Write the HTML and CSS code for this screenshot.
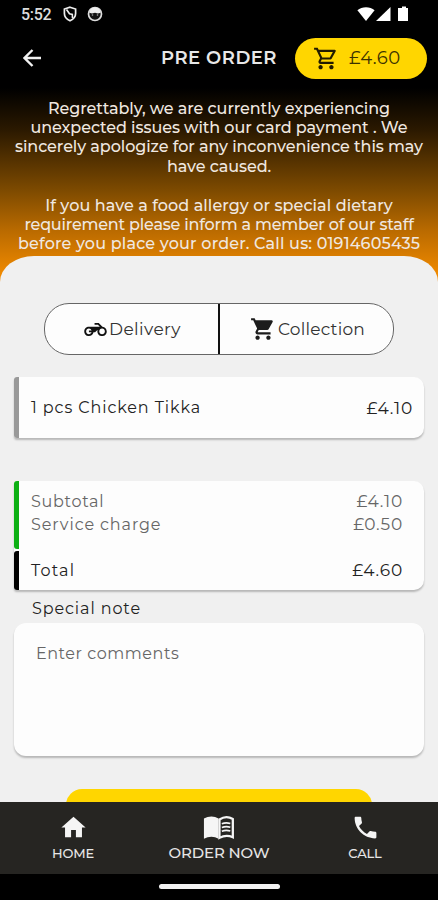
FILE: index.html
```html
<!DOCTYPE html>
<html lang="en">
<head>
<meta charset="utf-8">
<title>Pre Order</title>
<link rel="stylesheet" href="styles.css">
</head>
<body>
<div class="screen">
  <div class="status">
    <span class="time">5:52</span>
    <svg class="shield" viewBox="0 0 14 16"><path d="M7 1.200 12.600 3v4.600c0 3.400-2.300 5.800-5.600 7.200C3.700 13.400 1.400 11 1.400 7.600V3z" fill="none" stroke="#eee" stroke-width="1.700"/><path d="M3.500 3.500 6.500 7.800 9.300 8.500 9.500 12" fill="none" stroke="#eee" stroke-width="1.600"/></svg>
    <svg class="face" viewBox="0 0 16 16"><circle cx="8" cy="8" r="6.500" fill="#111" stroke="#ddd" stroke-width="1.700"/><path d="M2.300 6.800C2.700 3.200 5 1.500 8 1.500s5.300 1.700 5.700 5.300L11 7.600 8 6.800 5 7.600z" fill="#eee"/><circle cx="5.500" cy="9" r=".8" fill="#aaa"/><circle cx="10.500" cy="9" r=".8" fill="#aaa"/></svg>
    <svg class="signals" viewBox="0 0 52 16"><path d="M9 15 .4 4.200C5 .2 13 .2 17.600 4.200z" fill="#fff"/><path d="M33.500 1v14H19z" fill="#fff"/><path d="M43 2h2V.5h4V2h2v13H41V2z" fill="#fff"/></svg>
  </div>
  <header class="appbar">
    <svg class="back" viewBox="0 0 18 18"><path d="M18 9H1.500M9.500 1 1.500 9l8 8" fill="none" stroke="#f2f2f2" stroke-width="2.400"/></svg>
    <h1 class="title">PRE ORDER</h1>
    <button class="cart">
      <svg class="cart-icon" viewBox="0 0 24 24"><path d="M15.550 13c.75 0 1.410-.41 1.750-1.030l3.580-6.490A.996.996 0 0 0 20.010 4H5.210l-.94-2H1v2h2l3.600 7.590-1.350 2.440C4.520 15.370 5.480 17 7 17h12v-2H7l1.100-2h7.450zM6.160 6h12.150l-2.760 5H8.530L6.160 6zM7 18c-1.100 0-1.990.9-1.990 2S5.900 22 7 22s2-.9 2-2-.9-2-2-2zm10 0c-1.100 0-1.990.9-1.990 2s.89 2 1.990 2 2-.9 2-2-.9-2-2-2z"/></svg>
      <span>£4.60</span>
    </button>
  </header>
  <section class="notice">
    <p>Regrettably, we are currently experiencing<br>unexpected issues with our card payment . We<br>sincerely apologize for any inconvenience this may<br>have caused.</p>
    <p><span class="wide">If you have a food allergy or special dietary</span><br><span class="tight">requirement please inform a member of our staff</span><br><span class="widest">before you place your order. Call us: 01914605435</span></p>
  </section>
  <main class="sheet">
    <div class="modes">
      <div class="mode delivery">
        <svg class="bike" viewBox="0 4 24 16"><path d="M19.440 9.030 15.410 5H11v2h3.590l2 2H5c-2.800 0-5 2.200-5 5s2.200 5 5 5c2.460 0 4.450-1.690 4.900-4h1.650l2.770-2.770c-.21.54-.32 1.140-.32 1.770 0 2.800 2.200 5 5 5s5-2.200 5-5c0-2.650-1.970-4.770-4.560-4.970zM7.820 15C7.400 16.150 6.280 17 5 17c-1.630 0-3-1.370-3-3s1.370-3 3-3c1.280 0 2.400.85 2.820 2H5v2h2.820zM19 17c-1.660 0-3-1.340-3-3s1.340-3 3-3 3 1.340 3 3-1.340 3-3 3z"/></svg>
        <span>Delivery</span>
      </div>
      <div class="mode collection">
        <svg class="trolley" viewBox="0 0 24 24"><path d="M7 18c-1.100 0-1.990.9-1.990 2S5.900 22 7 22s2-.9 2-2-.9-2-2-2zM1 2v2h2l3.600 7.590-1.350 2.450c-.16.28-.25.61-.25.96 0 1.100.9 2 2 2h12v-2H7.420c-.14 0-.25-.11-.25-.25l.03-.12.900-1.630h7.450c.75 0 1.410-.41 1.750-1.030l3.580-6.490A1 1 0 0 0 20 4H5.210l-.94-2H1zm16 16c-1.100 0-1.990.9-1.990 2s.89 2 1.990 2 2-.9 2-2-.9-2-2-2z"/></svg>
        <span>Collection</span>
      </div>
    </div>
    <div class="card item">
      <div class="stripe"><i class="grey"></i></div>
      <span class="item-name">1 pcs Chicken Tikka</span><span class="price">£4.10</span>
    </div>
    <div class="card totals">
      <div class="stripe"><i class="green"></i><i class="black"></i></div>
      <div class="rows">
        <div class="row"><span>Subtotal</span><span class="price">£4.10</span></div>
        <div class="row service"><span>Service charge</span><span class="price">£0.50</span></div>
        <div class="row total"><span>Total</span><span class="price">£4.60</span></div>
      </div>
    </div>
    <h2 class="note-title">Special note</h2>
    <div class="card note">Enter comments</div>
    <div class="submit"></div>
  </main>
  <nav class="nav">
    <a class="tab"><svg viewBox="0 0 24 24"><path d="M10 20v-6h4v6h5v-8h3L12 3 2 12h3v8z"/></svg><span>HOME</span></a>
    <a class="tab big"><svg viewBox="0 0 34 26"><path d="M1 3C6 0 12 0 16.500 3v21.500C12 21.500 6 21.500 1 24.500z"/><path d="M17.500 4C22 1 27.500 1 31.700 3.500v19.300c-4.200-1.800-9.700-1.800-14.200.7z" fill="none" stroke="#f5f5f5" stroke-width="2.400"/><path d="M20 8.500c3-1.200 6-1.200 9-.3M20 12.500c3-1.200 6-1.200 9-.3M20 16.500c3-1.200 6-1.200 9-.3" fill="none" stroke="#f5f5f5" stroke-width="1.900"/></svg><span>ORDER NOW</span></a>
    <a class="tab"><svg viewBox="0 0 24 24"><path d="M6.620 10.790c1.440 2.830 3.760 5.140 6.590 6.590l2.200-2.200c.27-.27.67-.36 1.020-.24 1.120.37 2.330.57 3.570.57.55 0 1 .45 1 1V20c0 .55-.45 1-1 1-9.390 0-17-7.610-17-17 0-.55.45-1 1-1h3.500c.55 0 1 .45 1 1 0 1.250.2 2.450.57 3.570.11.35.03.74-.25 1.020l-2.200 2.200z"/></svg><span>CALL</span></a>
  </nav>
  <div class="gesture"><div class="pill"></div></div>
</div>
</body>
</html>
```

FILE: styles.css
```css
* { box-sizing: border-box; margin: 0; padding: 0; }
body { background: #000; }
svg { display: block; flex: none; }
.screen {
  width: 438px; height: 900px; overflow: hidden;
  display: flex; flex-direction: column;
  background: linear-gradient(#000 88px, #2b1900 130px, #7d4a00 190px, #b96a00 230px, #f08a00 275px);
  font-family: Montserrat, Inter, "Liberation Sans", sans-serif;
  font-size: 16px; white-space: nowrap;
}
.status { height: 28px; flex: none; display: flex; align-items: center; padding: 0 29px 0 21px; }
.time { font: 500 16px/28px Roboto, sans-serif; color: #ddd; letter-spacing: -.3px; width: 42px; padding-top: 1px; }
.shield { width: 14px; height: 16px; }
.face { width: 16px; height: 16px; margin-left: 10px; }
.signals { width: 52px; height: 16px; margin-left: auto; }
.appbar { height: 60px; flex: none; display: flex; align-items: center; padding: 0 11px 0 23px; }
.back { width: 18px; height: 18px; }
.title { font-size: 18px; font-weight: 600; color: #e8e8e8; margin-left: 120px; width: 134px; letter-spacing: .5px; }
.cart {
  width: 132px; height: 41px; border: 0; border-radius: 21px; background: #ffd600;
  display: flex; align-items: center; padding-left: 18px; gap: 10px;
  font: 400 18px Montserrat, Inter, sans-serif; color: #3c3200; letter-spacing: .4px;
}
.cart-icon { width: 26px; height: 27px; fill: #221c00; }
.notice { height: 168px; flex: none; padding-top: 10.500px; text-align: center; color: #f0e8e0; line-height: 19.4px; font-weight: 500; letter-spacing: -.07px; }
.notice p + p { margin-top: 19.4px; }
.wide { letter-spacing: .08px; }
.tight { letter-spacing: -.2px; }
.widest { letter-spacing: .18px; }
.sheet { flex: 1; min-height: 0; overflow: hidden; background: #f0f0f0; border-radius: 34px 34px 0 0 / 26px 26px 0 0; padding: 47px 14px 0; display: flex; flex-direction: column; }
.modes { flex: none; height: 52px; margin: 0 30px; background: #fdfdfd; border: 1px solid #666; border-radius: 25px; display: grid; grid-template-columns: 175px 1fr; color: #333; font-size: 17px; letter-spacing: .4px; }
.mode { display: flex; align-items: center; }
.delivery { border-right: 2px solid #111; padding-left: 39px; gap: 2px; }
.collection { padding-left: 30px; gap: 2px; letter-spacing: .2px; }
.bike { width: 23px; height: 15px; fill: #111; }
.trolley { width: 26px; height: 26px; fill: #1c1c1c; }
.card { flex: none; background: #fdfdfd; border-radius: 12px; box-shadow: 0 2px 2px rgba(0,0,0,.24); }
.item { height: 61px; margin-top: 22px; border-radius: 3px 10px 10px 3px; display: flex; align-items: center; padding-right: 11px; color: #222; }
.stripe { width: 5px; height: 100%; flex: none; display: flex; flex-direction: column; gap: 2px; }
.stripe i { display: block; border-radius: 3px 0 0 3px; }
.grey { height: 61px; background: #999; }
.green { height: 68px; background: #0db014; }
.black { height: 39px; background: #000; }
.item-name { margin-left: 12px; letter-spacing: .9px; }
.price { margin-left: auto; font-size: 17px; letter-spacing: .8px; }
.totals { height: 109px; margin-top: 43px; border-radius: 3px 10px 10px 3px; display: flex; }
.rows { flex: 1; padding: 9px 21px 0 12px; color: #666; line-height: 23px; letter-spacing: .7px; }
.row { display: flex; }
.service { letter-spacing: .9px; }
.total { margin-top: 23px; color: #222; letter-spacing: 1.200px; }
.note-title { font-size: 16px; font-weight: 400; color: #222; line-height: 20px; margin: 9px 0 4px 18px; letter-spacing: .9px; }
.note { height: 133px; padding: 21px 22px; line-height: 20px; color: #666; letter-spacing: .55px; }
.submit { flex: none; height: 48px; margin: 33px 52px 0; background: #ffd600; border-radius: 16px; }
.nav { height: 72px; flex: none; background: #262522; display: grid; grid-template-columns: 146px 146px 146px; color: #e6e6e6; }
.tab { display: flex; flex-direction: column; align-items: center; padding-top: 11px; font-size: 13px; font-weight: 500; line-height: 16px; letter-spacing: -.15px; }
.tab svg { width: 29px; height: 29px; margin-bottom: 3px; fill: #f5f5f5; }
.big { font-size: 15px; }
.big svg { width: 32px; height: 26px; margin: 2px 0 4px; }
.gesture { height: 26px; flex: none; background: #000; display: flex; justify-content: center; padding-top: 10px; }
.pill { width: 121px; height: 5px; border-radius: 3px; background: #f2f2f2; }
```
